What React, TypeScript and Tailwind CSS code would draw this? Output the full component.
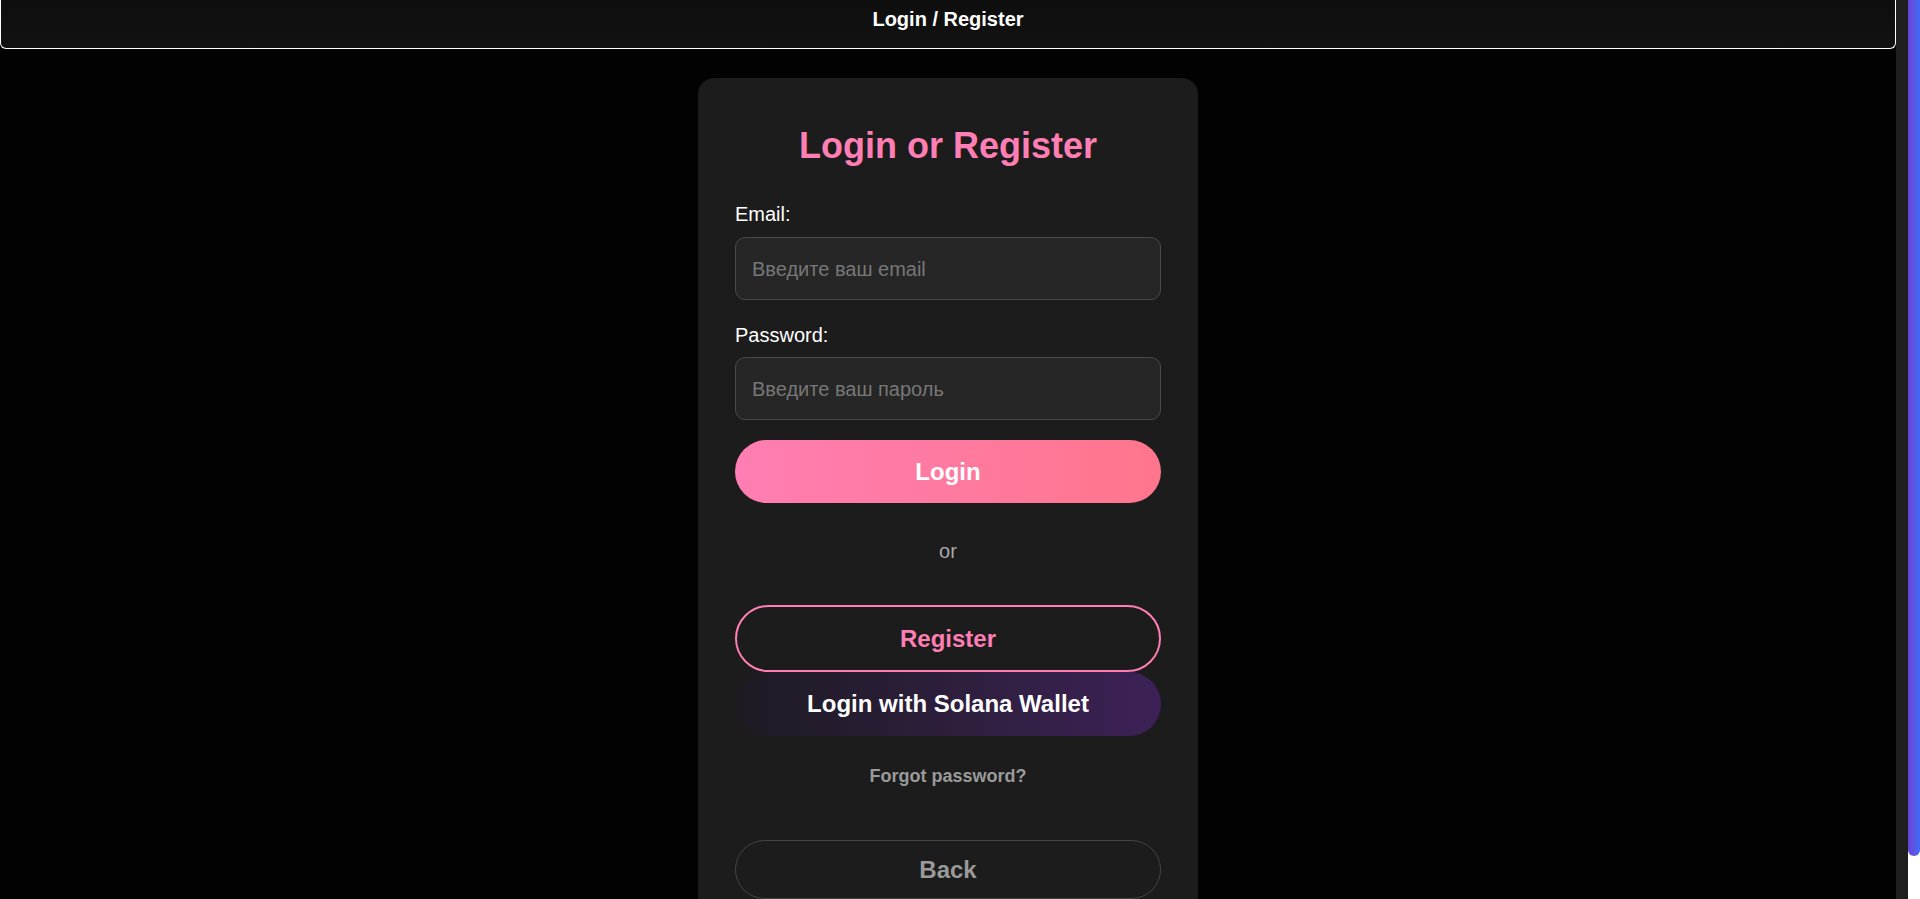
import React from "react";

export default function App() {
  return (
    <div className="flex h-[899px] w-full overflow-hidden bg-[#020202] font-['Liberation_Sans',Arial,sans-serif]">
      <div className="flex min-w-0 flex-1 flex-col items-center bg-[#020202]">
        <header className="flex h-[49px] w-full shrink-0 justify-center rounded-b-[6px] border-x border-b border-white bg-gradient-to-b from-[#0e0e0e] to-[#121212] pt-[8px]">
          <span className="text-[20px] font-bold leading-[23px] text-white">Login / Register</span>
        </header>

        <div className="mt-[29px] w-[500px] shrink-0 rounded-[16px] bg-[#1c1c1c] px-[37px] pb-10 pt-[47px]">
          <h2 className="text-center text-[36px] font-bold leading-[41px] text-[#ff7eb3]">Login or Register</h2>

          <label className="mt-[37px] mb-[11px] block text-[20px] leading-[23px] text-white">Email:</label>
          <input
            type="email"
            placeholder="Введите ваш email"
            className="block h-[63px] w-full rounded-[10px] border border-[#4a4a4a] bg-[#262626] px-4 pt-[2px] text-[20px] text-white outline-none placeholder:text-[#777]"
          />

          <label className="mt-[24px] mb-[10px] block text-[20px] leading-[23px] text-white">Password:</label>
          <input
            type="password"
            placeholder="Введите ваш пароль"
            className="block h-[63px] w-full rounded-[10px] border border-[#4a4a4a] bg-[#262626] px-4 pt-[2px] text-[20px] text-white outline-none placeholder:text-[#777]"
          />

          <button className="mt-[20px] flex h-[63px] w-full items-center justify-center rounded-full bg-gradient-to-r from-[#ff7eb3] to-[#ff758c] text-[24px] font-bold text-white">
            Login
          </button>

          <div className="mt-[37px] text-center text-[20px] leading-[23px] text-[#a8a8a8]">or</div>

          <button className="mt-[42px] flex h-[67px] w-full items-center justify-center rounded-full border-2 border-[#ff7eb3] bg-transparent text-[24px] font-bold text-[#ff7eb3]">
            Register
          </button>
          <button className="flex h-[64px] w-full items-center justify-center rounded-full bg-gradient-to-r from-[#1d1a22] to-[#3d2157] text-[24px] font-bold text-white">
            Login with Solana Wallet
          </button>

          <div className="mt-[30px] text-center text-[18px] font-bold leading-[21px] text-[#9a9a9a]">Forgot password?</div>

          <button className="mt-[53px] flex h-[59px] w-full items-center justify-center rounded-full border border-[#444] bg-transparent text-[24px] font-bold text-[#9a9a9a]">
            Back
          </button>
        </div>
      </div>
      <div className="w-[12px] shrink-0 bg-[#1e1e1e]" />
      <div className="w-[12px] shrink-0 bg-white">
        <div className="h-[856px] rounded-b-full bg-gradient-to-r from-[#6a3fd6] to-[#3d6bf5]" />
      </div>
    </div>
  );
}
